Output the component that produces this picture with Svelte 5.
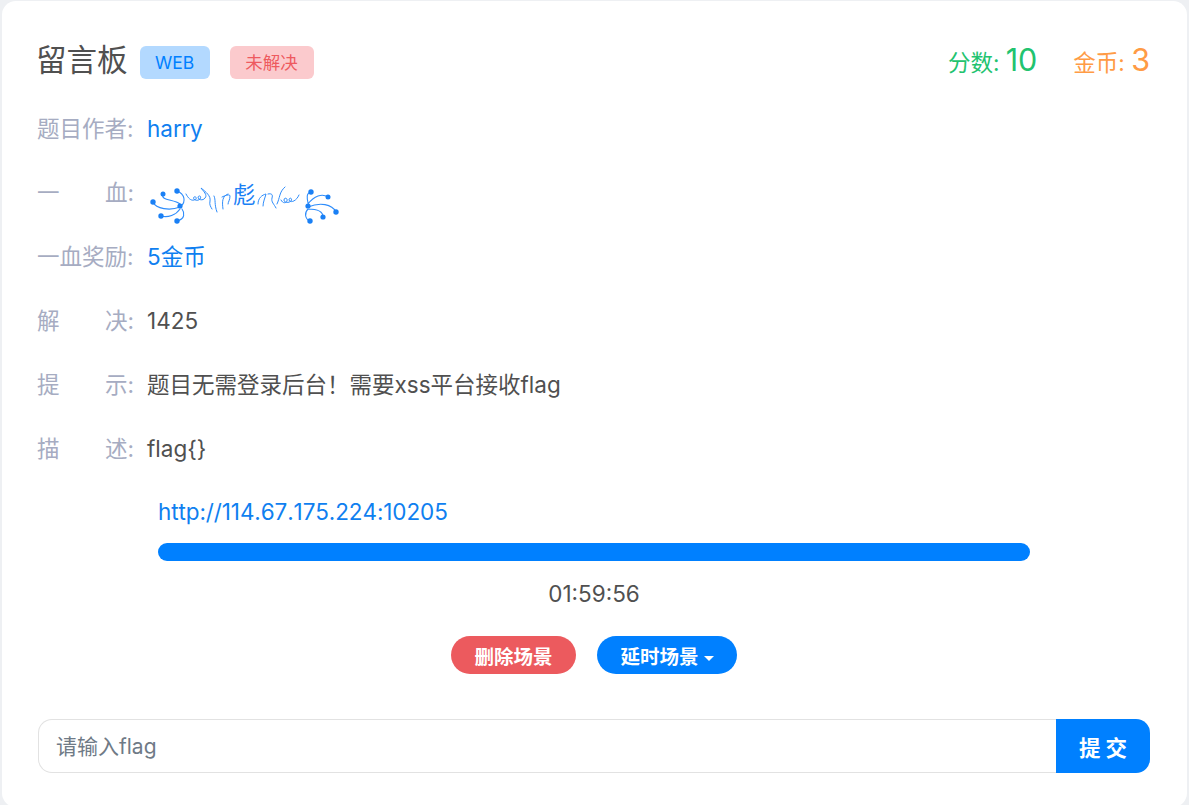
<script>
  const rows = [
    { label: '解决', value: '1425' },
    { label: '提示', value: '题目无需登录后台！需要xss平台接收flag' },
    { label: '描述', value: 'flag{}' }
  ];
</script>

<div class="page">
  <div class="card">
    <div class="head">
      <div class="title">
        <h1>留言板</h1>
        <span class="tag tag-blue">WEB</span>
        <span class="tag tag-red">未解决</span>
      </div>
      <div class="stats">
        <span class="green">分数: <b>10</b></span>
        <span class="orange">金币: <b>3</b></span>
      </div>
    </div>

    <div class="row">
      <span class="label">题目作者:</span>
      <span class="value link">harry</span>
    </div>
    <div class="row">
      <span class="label spread"><i>一</i><i>血:</i></span>
      <span class="value blood">
        <svg width="190" height="42" viewBox="0 0 190 42" fill="none" stroke="#2f8dfb" stroke-width="1.1" stroke-linecap="round">
          <path d="M3 20C6 27 20 29 30 25M13 12C10 19 24 17 30 22M27 9C35 12 36 20 31 24M11 34C18 36 26 33 30 27M27 39C35 37 35 31 32 27" />
          <path d="M158 22C164 14 172 11 178 15M161 10C156 11 157 16 158 21M158 25C170 20 182 22 186 30M158 27C166 27 173 29 173 35M158 27C154 31 155 37 160 39" />
          <g fill="#1a80f5" stroke="none">
            <circle cx="3" cy="20" r="2.7" />
            <circle cx="13" cy="12" r="2.5" />
            <circle cx="27" cy="9" r="2.7" />
            <circle cx="30" cy="24" r="2.6" />
            <circle cx="11" cy="34" r="2.7" />
            <circle cx="27" cy="39" r="2.7" />
            <circle cx="158" cy="24" r="2.6" />
            <circle cx="161" cy="10" r="2.7" />
            <circle cx="178" cy="15" r="2.5" />
            <circle cx="186" cy="30" r="2.7" />
            <circle cx="173" cy="35" r="2.6" />
            <circle cx="160" cy="39" r="2.7" />
          </g>
          <g stroke-width="1">
            <path d="M36 12C38 16 41 19 44 18C48 17 46 14 44 15C42 17 47 20 50 17C52 14 49 13 48 15C48 18 53 19 55 16C58 13 53 9 51 6C56 10 61 14 60 19C59 23 61 25 62 27" />
            <path d="M64 14C66 18 64 22 67 30M73 27C72 20 72 14 78 12M72 15C76 13 80 12 80 14C80 18 78 20 78 22" />
            <path d="M108 22C108 16 112 13 116 12C115 16 113 20 113 24M118 12C122 11 123 13 122 16C121 20 124 22 126 26M127 22C130 16 129 10 135 5" />
            <path d="M131 18C133 22 136 21 137 19C138 16 134 15 134 18C134 21 139 21 141 19C143 16 139 15 139 18C140 21 146 20 149 13" />
          </g>
          <text x="83" y="21" class="biao">彪</text>
        </svg>
      </span>
    </div>
    <div class="row">
      <span class="label">一血奖励:</span>
      <span class="value link">5金币</span>
    </div>
    {#each rows as row}
      <div class="row">
        <span class="label spread"><i>{row.label[0]}</i><i>{row.label[1]}:</i></span>
        <span class="value">{row.value}</span>
      </div>
    {/each}

    <div class="scene">
      <div class="scene-url">http://114.67.175.224:10205</div>
      <div class="progress"></div>
      <div class="timer">01:59:56</div>
      <div class="actions">
        <button class="pill red">删除场景</button>
        <button class="pill blue">延时场景<span class="caret"></span></button>
      </div>
    </div>

    <div class="flag">
      <input type="text" placeholder="请输入flag" />
      <button>提 交</button>
    </div>
  </div>
</div>

<style>
  :global(body) {
    margin: 0;
    background: #eef0f3;
    font-family: Inter, "Noto Sans CJK SC", sans-serif;
    color: #505050;
    font-kerning: none;
  }
  .page {
    height: 805px;
    padding: 1px 2px 0;
    box-sizing: border-box;
    overflow: hidden;
  }
  .card {
    background: #fff;
    border-radius: 14px;
    height: 806px;
    padding: 34px 37px 0 36px;
    box-sizing: border-box;
  }
  .head {
    display: flex;
    justify-content: space-between;
    align-items: center;
    height: 50px;
    margin-bottom: 23px;
  }
  .title {
    display: flex;
    align-items: center;
    margin-left: -2px;
  }
  h1 {
    margin: 0 12px 0 0;
    font-size: 30.5px;
    font-weight: 400;
    line-height: 50px;
  }
  .tag {
    display: block;
    height: 33px;
    line-height: 33px;
    margin-top: 4px;
    border-radius: 6px;
    font-size: 17.5px;
    text-align: center;
    box-sizing: border-box;
  }
  .tag-blue {
    width: 70px;
    background: #b3d9ff;
    color: #0080ff;
    margin-right: 20px;
  }
  .tag-red {
    width: 84px;
    background: #fbcacd;
    color: #ee5a5f;
  }
  .stats {
    display: flex;
    gap: 36px;
    font-size: 22.5px;
    align-items: baseline;
    margin-top: -2px;
  }
  .stats b {
    font-weight: 400;
    font-size: 30.5px;
  }
  .green {
    color: #22c36f;
  }
  .orange {
    color: #ff9b45;
  }
  .row {
    display: flex;
    height: 64px;
    font-size: 22.5px;
    line-height: 42px;
  }
  .label {
    width: 97px;
    margin: 0 13px 0 -1px;
    color: #a6acc2;
    flex: none;
    white-space: nowrap;
  }
  .spread {
    display: flex;
    justify-content: space-between;
  }
  .spread i {
    font-style: normal;
  }
  .link {
    color: #0f7ff0;
  }
  .blood {
    display: block;
    height: 52px;
  }
  .blood svg {
    display: block;
    margin: 10px 0 0 3px;
  }
  .biao {
    font-size: 22.5px;
    fill: #1a80f5;
    stroke: none;
  }
  .scene {
    margin: -1px 120px 0 120px;
  }
  .scene-url {
    color: #0f7ff0;
    font-size: 22.5px;
    line-height: 42px;
    letter-spacing: -0.1px;
  }
  .progress {
    height: 18px;
    margin-top: 10px;
    background: #0080ff;
    border-radius: 9px;
  }
  .timer {
    text-align: center;
    font-size: 22.5px;
    line-height: 42px;
    margin-top: 12px;
  }
  .actions {
    display: flex;
    justify-content: center;
    gap: 21px;
    margin-top: 21px;
  }
  .pill {
    height: 38px;
    border: 0;
    border-radius: 19px;
    color: #fff;
    font: 700 19.5px Inter, "Noto Sans CJK SC", sans-serif;
    padding: 0;
  }
  .red {
    width: 125px;
    background: #ec5a5e;
  }
  .blue {
    width: 140px;
    background: #0080ff;
  }
  .caret {
    display: inline-block;
    margin-left: 5px;
    vertical-align: 3px;
    border-top: 5px solid #fff;
    border-left: 5px solid transparent;
    border-right: 5px solid transparent;
  }
  .flag {
    display: flex;
    height: 54px;
    margin-top: 45px;
  }
  .flag input {
    flex: 1;
    min-width: 0;
    box-sizing: border-box;
    border: 1px solid #e2e2e2;
    border-right: 0;
    border-radius: 14px 0 0 14px;
    padding: 0 17px;
    font: 400 21px Inter, "Noto Sans CJK SC", sans-serif;
    outline: none;
  }
  .flag input::placeholder {
    color: #6f7a86;
    opacity: 1;
  }
  .flag button {
    width: 94px;
    border: 0;
    background: #0080ff;
    color: #fff;
    border-radius: 0 14px 14px 0;
    font: 700 21.5px Inter, "Noto Sans CJK SC", sans-serif;
    padding: 0;
  }
</style>
